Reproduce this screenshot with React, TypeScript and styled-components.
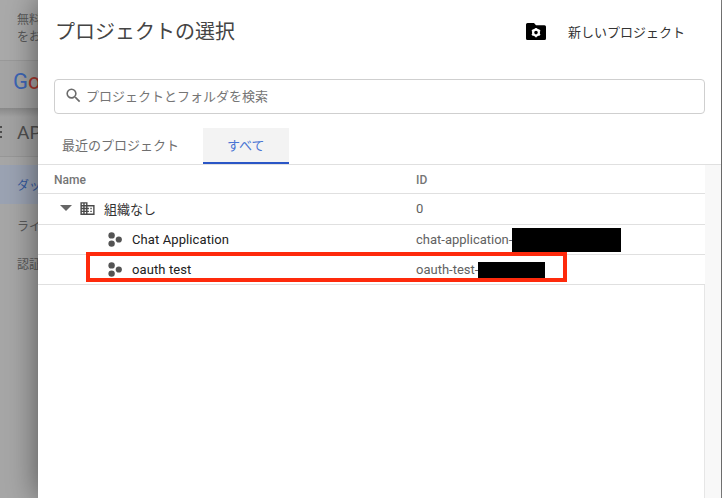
import React from "react";
import styled, { createGlobalStyle } from "styled-components";
import { MdDomain, MdSearch } from "react-icons/md";

const GlobalStyle = createGlobalStyle`
  html, body {
    margin: 0;
    padding: 0;
    height: 100%;
    overflow: hidden;
    background: #8c8c8c;
    font-family: Roboto, "Noto Sans CJK JP", sans-serif;
  }
  * {
    box-sizing: border-box;
  }
`;

const FolderGearIcon = () => (
  <svg width="20" height="17" viewBox="0 0 20 17">
    <path d="M1.5 0H8l2 2.2h8.5A1.5 1.5 0 0 1 20 3.7v11.8a1.5 1.5 0 0 1-1.5 1.5h-17A1.5 1.5 0 0 1 0 15.5V1.5A1.5 1.5 0 0 1 1.5 0z" fill="#000" />
    <circle cx="10" cy="9.6" r="2.9" fill="none" stroke="#fff" strokeWidth="2.2" />
    <path d="M10 4.9v2M10 12.3v2M5.9 7.2l1.8 1M12.3 11l1.8 1M5.9 12l1.8-1M12.3 8.2l1.8-1" stroke="#fff" strokeWidth="1.7" />
  </svg>
);

const ProjectIcon = () => (
  <svg width="14" height="15" viewBox="0 0 14 15">
    <circle cx="3.6" cy="3.4" r="3.2" fill="#545454" />
    <circle cx="3.6" cy="11.6" r="3.2" fill="#545454" />
    <circle cx="10.8" cy="7.5" r="3.1" fill="#545454" />
  </svg>
);

const App = () => {
  return (
    <>
      <GlobalStyle />
      <Page>
        <Backdrop>
          <Notice>
            <div>無料</div>
            <div>をお</div>
          </Notice>
          <BrandBar>
            <GoogleBlue>G</GoogleBlue>
            <GoogleRed>o</GoogleRed>
          </BrandBar>
          <ApiBar>
            <MenuGlyph />
            <ApiTitle>AP</ApiTitle>
          </ApiBar>
          <SideList>
            <SideItem $active>ダッ</SideItem>
            <SideItem>ライ</SideItem>
            <SideItem>認証</SideItem>
          </SideList>
        </Backdrop>
        <Dialog>
          <DialogHeader>
            <Title>プロジェクトの選択</Title>
            <NewProject>
              <FolderGearIcon />
              <span>新しいプロジェクト</span>
            </NewProject>
          </DialogHeader>
          <SearchBox>
            <MdSearch size={19} color="#6b6b6b" />
            <span>プロジェクトとフォルダを検索</span>
          </SearchBox>
          <Tabs>
            <Tab>最近のプロジェクト</Tab>
            <Tab $active>すべて</Tab>
          </Tabs>
          <TableArea>
            <Table>
              <HeadRow>
                <span>Name</span>
                <span>ID</span>
              </HeadRow>
              <OrgRow $height={31}>
                <NameCell $indent={22}>
                  <Caret />
                  <MdDomain size={17} color="#4a4a4a" />
                  <OrgName>組織なし</OrgName>
                </NameCell>
                <IdCell>0</IdCell>
              </OrgRow>
              <Row $height={30}>
                <NameCell $indent={70}>
                  <ProjectIcon />
                  <ProjectName>Chat Application</ProjectName>
                </NameCell>
                <IdCell>
                  chat-application-
                  <Redaction $width={109} $height={24} />
                </IdCell>
              </Row>
              <Row $height={30}>
                <NameCell $indent={70}>
                  <ProjectIcon />
                  <ProjectName>oauth test</ProjectName>
                </NameCell>
                <IdCell>
                  oauth-test-
                  <Redaction $width={67} $height={16} />
                </IdCell>
                <Highlight />
              </Row>
              <EmptyArea />
            </Table>
            <ScrollTrack />
          </TableArea>
        </Dialog>
      </Page>
    </>
  );
};

const Page = styled.div`
  display: flex;
  width: 722px;
  height: 498px;
  overflow: hidden;
  padding-right: 1px;
`;

const Backdrop = styled.div`
  width: 38px;
  flex-shrink: 0;
  overflow: hidden;
  background: #a7a7a7;
  white-space: nowrap;
  color: #5a5a5a;
`;

const Notice = styled.div`
  height: 61px;
  padding: 12px 0 0 17px;
  font-size: 12px;
  line-height: 17px;
  background: #aaaaaa;
  border-bottom: 1px solid #9a9a9a;
`;

const BrandBar = styled.div`
  height: 47px;
  padding: 0 0 6px 13px;
  display: flex;
  align-items: center;
  font-size: 22px;
  font-weight: 400;
  background: #a5a5a5;
`;

const GoogleBlue = styled.span`
  color: #3d66b5;
`;

const GoogleRed = styled.span`
  color: #a8392f;
`;

const ApiBar = styled.div`
  height: 49px;
  display: flex;
  align-items: center;
  background: linear-gradient(#8a8a8a, #a3a3a3 9px);
  border-bottom: 1px solid #989898;
`;

const MenuGlyph = styled.div`
  width: 2px;
  height: 12px;
  margin-right: 15px;
  flex-shrink: 0;
  background: repeating-linear-gradient(#4e4e4e 0 2px, transparent 2px 5px);
`;

const ApiTitle = styled.div`
  font-size: 19px;
  color: #4f4f4f;
`;

const SideList = styled.div`
  padding-top: 8px;
`;

const SideItem = styled.div<{ $active?: boolean }>`
  height: ${(p) => (p.$active ? "39px" : "38px")};
  margin-bottom: ${(p) => (p.$active ? "2px" : "0")};
  padding-left: 17px;
  display: flex;
  align-items: center;
  font-size: 12px;
  background: ${(p) => (p.$active ? "#9ba3b3" : "transparent")};
  color: ${(p) => (p.$active ? "#33589e" : "#5a5a5a")};
`;

const Dialog = styled.div`
  flex: 1;
  min-width: 0;
  display: flex;
  flex-direction: column;
  background: #fff;
  box-shadow: 0 0 30px rgba(0, 0, 0, 0.5);
`;

const DialogHeader = styled.div`
  height: 79px;
  flex-shrink: 0;
  padding: 18px 36px 0 17px;
  display: flex;
  justify-content: space-between;
  align-items: flex-start;
`;

const Title = styled.h1`
  margin: 0;
  font-size: 20px;
  line-height: 28px;
  font-weight: 400;
  color: #444;
`;

const NewProject = styled.div`
  display: flex;
  align-items: center;
  gap: 22px;
  height: 28px;
  margin-top: -1px;
  font-size: 13px;
  color: #333;
`;

const SearchBox = styled.div`
  height: 35px;
  flex-shrink: 0;
  margin: 0 16px;
  padding: 0 0 2px 9px;
  display: flex;
  align-items: center;
  gap: 3px;
  border: 1px solid #cfcfcf;
  border-radius: 4px;
  font-size: 13px;
  color: #757575;
`;

const Tabs = styled.div`
  height: 37px;
  flex-shrink: 0;
  margin-top: 14px;
  padding-left: 8px;
  display: flex;
  gap: 8px;
  border-bottom: 1px solid #e0e0e0;
`;

const Tab = styled.div<{ $active?: boolean }>`
  height: 36px;
  padding: 0 ${(p) => (p.$active ? "24px" : "16px")} 2px;
  display: flex;
  align-items: center;
  font-size: 13px;
  color: ${(p) => (p.$active ? "#4a76d4" : "#6f6f6f")};
  background: ${(p) => (p.$active ? "#f3f3f3" : "transparent")};
  border-bottom: 2px solid ${(p) => (p.$active ? "#2a56c6" : "transparent")};
`;

const TableArea = styled.div`
  flex: 1;
  min-height: 0;
  display: flex;
`;

const Table = styled.div`
  flex: 1;
  min-width: 0;
  display: flex;
  flex-direction: column;
`;

const HeadRow = styled.div`
  height: 29px;
  flex-shrink: 0;
  padding: 1px 0 0 16px;
  display: grid;
  grid-template-columns: 362px 1fr;
  align-items: center;
  font-size: 12px;
  font-weight: 500;
  color: #757575;
  border-bottom: 1px solid #e0e0e0;
`;

const Row = styled.div<{ $height: number }>`
  height: ${(p) => p.$height}px;
  flex-shrink: 0;
  display: grid;
  grid-template-columns: 378px 1fr;
  align-items: center;
  position: relative;
  border-bottom: 1px solid #e0e0e0;
  font-size: 13px;
  color: #212121;
`;

const OrgRow = styled(Row)`
  padding-bottom: 2px;
`;

const NameCell = styled.div<{ $indent: number }>`
  padding-left: ${(p) => p.$indent}px;
  display: flex;
  align-items: center;
  gap: 10px;
`;

const Caret = styled.span`
  width: 0;
  height: 0;
  margin-right: -3px;
  border-left: 6px solid transparent;
  border-right: 6px solid transparent;
  border-top: 6px solid #666;
`;

const OrgName = styled.span`
  margin-left: -2px;
  color: #333;
`;

const ProjectName = styled.span`
  letter-spacing: 0.1px;
`;

const IdCell = styled.div`
  display: flex;
  align-items: center;
  color: #616161;
`;

const Redaction = styled.span<{ $width: number; $height: number }>`
  width: ${(p) => p.$width}px;
  height: ${(p) => p.$height}px;
  flex-shrink: 0;
  background: #000;
`;

const Highlight = styled.div`
  position: absolute;
  left: 48px;
  top: -3px;
  width: 481px;
  height: 30px;
  border: 4px solid #fe2a0c;
  pointer-events: none;
`;

const EmptyArea = styled.div`
  flex: 1;
  border-right: 1px solid #e6e6e6;
`;

const ScrollTrack = styled.div`
  width: 16px;
  flex-shrink: 0;
  background: #f8f8f8;
`;

export default App;
